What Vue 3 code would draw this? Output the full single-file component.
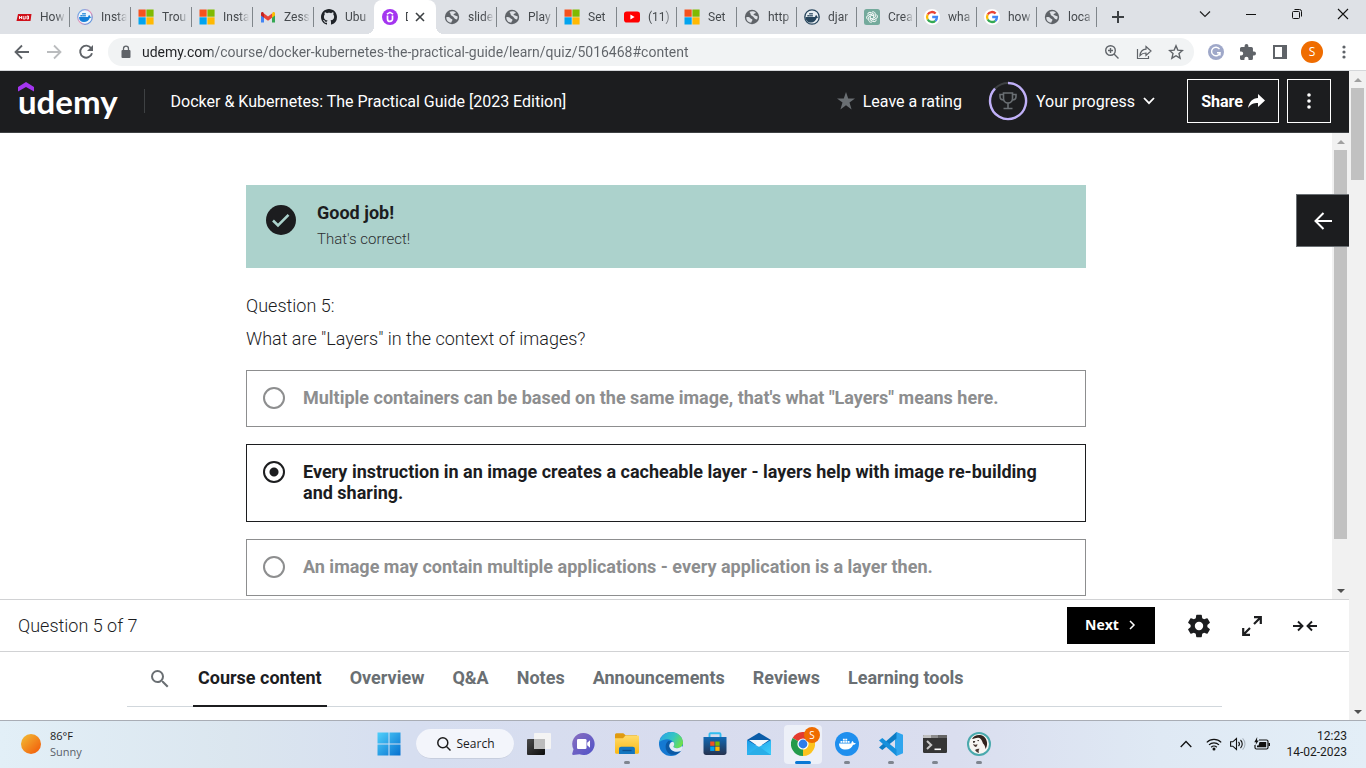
<script setup>
import { ref } from 'vue'

const leftTabs = [
  { icon: 'hud', title: 'How' },
  { icon: 'docker-ring', title: 'Insta' },
  { icon: 'ms', title: 'Trou' },
  { icon: 'ms', title: 'Insta' },
  { icon: 'gmail', title: 'Zess' },
  { icon: 'github', title: 'Ubu' }
]
const rightTabs = [
  { icon: 'globe', title: 'slide' },
  { icon: 'globe', title: 'Play' },
  { icon: 'ms', title: 'Set' },
  { icon: 'youtube', title: '(11)' },
  { icon: 'ms', title: 'Set' },
  { icon: 'globe', title: 'http' },
  { icon: 'docker-dark', title: 'djar' },
  { icon: 'gpt', title: 'Crea' },
  { icon: 'google', title: 'wha' },
  { icon: 'google', title: 'how' },
  { icon: 'globe', title: 'loca' }
]
const url = ref('udemy.com/course/docker-kubernetes-the-practical-guide/learn/quiz/5016468#content')

const picked = ref(1)
const answers = [
  'Multiple containers can be based on the same image, that\'s what "Layers" means here.',
  'Every instruction in an image creates a cacheable layer - layers help with image re-building and sharing.',
  'An image may contain multiple applications - every application is a layer then.'
]
const sections = ['Course content', 'Overview', 'Q&A', 'Notes', 'Announcements', 'Reviews', 'Learning tools']

const apps = [
  { icon: 'taskview', label: 'Task view' },
  { icon: 'chat', label: 'Chat' },
  { icon: 'explorer', label: 'File Explorer', open: true },
  { icon: 'edge', label: 'Edge' },
  { icon: 'store', label: 'Store' },
  { icon: 'mail', label: 'Mail' },
  { icon: 'chrome', label: 'Chrome', active: true },
  { icon: 'docker', label: 'Docker', open: true },
  { icon: 'vscode', label: 'Code', open: true },
  { icon: 'terminal', label: 'Terminal', open: true },
  { icon: 'beaver', label: 'DBeaver', open: true }
]
</script>

<template>
  <svg class="sprite" width="0" height="0" aria-hidden="true">
    <defs>
      <linearGradient id="g-win" x1="0" y1="0" x2="1" y2="1">
        <stop offset="0" stop-color="#4fd0fb" /><stop offset="1" stop-color="#0670cf" />
      </linearGradient>
      <linearGradient id="g-ring" x1="0" y1="0" x2="1" y2="1">
        <stop offset="0" stop-color="#3cb2ff" /><stop offset=".5" stop-color="#f48fb1" /><stop offset="1" stop-color="#2496ed" />
      </linearGradient>
      <linearGradient id="g-sun" x1="0" y1="0" x2="1" y2="1">
        <stop offset=".15" stop-color="#f2b030" /><stop offset=".8" stop-color="#f26a10" />
      </linearGradient>
      <linearGradient id="g-chat" x1="0" y1="0" x2="1" y2="1">
        <stop offset="0" stop-color="#8a6fc0" /><stop offset="1" stop-color="#4f52c8" />
      </linearGradient>
      <linearGradient id="g-folder" x1="0" y1="0" x2="0" y2="1">
        <stop offset="0" stop-color="#ffdc6b" /><stop offset="1" stop-color="#fbb813" />
      </linearGradient>
      <linearGradient id="g-edge" x1="0" y1=".2" x2="1" y2=".6">
        <stop offset="0" stop-color="#2aa5e8" /><stop offset=".55" stop-color="#35c6c2" /><stop offset="1" stop-color="#6ee04a" />
      </linearGradient>
      <linearGradient id="g-store" x1="0" y1="0" x2="0" y2="1">
        <stop offset="0" stop-color="#1169b4" /><stop offset="1" stop-color="#26324f" />
      </linearGradient>
      <linearGradient id="g-mail" x1="0" y1="0" x2="1" y2="1">
        <stop offset="0" stop-color="#1c9be8" /><stop offset="1" stop-color="#3fd0fb" />
      </linearGradient>
      <linearGradient id="g-dark" x1="0" y1="0" x2="1" y2="1">
        <stop offset="0" stop-color="#4a4a4a" /><stop offset="1" stop-color="#0c0c0c" />
      </linearGradient>
    </defs>

    <symbol id="i-hud" viewBox="0 0 16 16">
      <path d="M2 5h13.5l-1 7H.5z" fill="#d0101a" />
      <path d="M3.500 7v3M5.500 7v3M3.500 8.500h2M7.200 7v3h2v-3M11 7v3h1.500v-3z" stroke="#fff" stroke-width=".9" fill="none" />
    </symbol>
    <symbol id="i-docker-ring" viewBox="0 0 16 16">
      <circle cx="8" cy="8" r="7.300" fill="#eef6fd" stroke="url(#g-ring)" stroke-width="1.200" />
      <path d="M2 8h9c.2-1 .6-1.600 1.200-2 .6.500.9 1.100.9 1.700.6-.1 1.200 0 1.600.3-.5.700-1.200.9-2 .9C11.800 11.600 9.800 13 7 13c-3 0-5-1.600-5-5z" fill="#1580d8" />
      <path d="M3.400 5.900h1.500v1.500H3.400zM5.300 5.900h1.500v1.500H5.300zM7.200 5.900h1.500v1.500H7.200zM5.300 4.100h1.500v1.400H5.300zM7.200 4.100h1.500v1.400H7.200z" fill="#1580d8" />
    </symbol>
    <symbol id="i-docker-dark" viewBox="0 0 16 16">
      <circle cx="8" cy="8" r="7.200" fill="#e8eef2" stroke="#27455c" stroke-width="1.300" />
      <path d="M1.500 8H11c.2-1 .6-1.600 1.200-2 .6.500.9 1.100.9 1.700.6-.1 1.200 0 1.600.3-.5.700-1.200.9-2 .9C11.800 11.600 9.800 13.500 7 13.500c-3.300 0-5.500-2-5.500-5.500z" fill="#27455c" />
      <path d="M3.400 5.900h1.500v1.500H3.400zM5.300 5.900h1.500v1.500H5.300zM7.200 5.900h1.500v1.500H7.200zM5.300 4.100h1.500v1.400H5.300zM7.200 4.100h1.500v1.400H7.200z" fill="#27455c" />
    </symbol>
    <symbol id="i-ms" viewBox="0 0 16 16">
      <path d="M.5.500h7.200v7.200H.5z" fill="#f6511d" /><path d="M8.400.500h7.200v7.200H8.400z" fill="#80ba01" />
      <path d="M.5 8.300h7.200v7.200H.5z" fill="#02a4ef" /><path d="M8.400 8.300h7.200v7.200H8.400z" fill="#ffb902" />
    </symbol>
    <symbol id="i-gmail" viewBox="0 0 16 16">
      <path d="M1 4v9.500h3V7z" fill="#4285f4" /><path d="M15 4v9.500h-3V7z" fill="#34a853" />
      <path d="M4 4.500v4.200l4 3 4-3V4.500l-4 3z" fill="#ea4335" />
      <path d="M1 4.300V6.500l3 2.200V4.500L3.200 3.200C2.200 2.500 1 3.200 1 4.300z" fill="#c5221f" />
      <path d="M15 4.300V6.500l-3 2.200V4.500l.8-1.300c1-.7 2.200 0 2.200 1.100z" fill="#fbbc04" />
    </symbol>
    <symbol id="i-github" viewBox="0 0 16 16">
      <path fill="#1f2328" d="M8 0C3.580 0 0 3.580 0 8c0 3.540 2.290 6.530 5.470 7.590.4.070.55-.17.55-.38 0-.19-.01-.82-.01-1.490-2.010.37-2.530-.49-2.690-.94-.09-.23-.48-.94-.82-1.130-.28-.15-.68-.52-.01-.53.63-.01 1.080.58 1.230.82.72 1.210 1.870.87 2.330.66.07-.52.28-.87.51-1.070-1.780-.2-3.640-.89-3.640-3.950 0-.87.31-1.590.82-2.150-.08-.2-.36-1.020.08-2.120 0 0 .67-.21 2.200.82.64-.18 1.320-.27 2-.27s1.360.09 2 .27c1.530-1.040 2.200-.82 2.200-.82.44 1.100.16 1.920.08 2.120.51.56.82 1.270.82 2.150 0 3.070-1.870 3.750-3.650 3.950.29.25.54.73.54 1.480 0 1.070-.01 1.930-.01 2.200 0 .21.15.46.55.38A8.010 8.010 0 0 0 16 8c0-4.420-3.580-8-8-8z" />
    </symbol>
    <symbol id="i-udemy" viewBox="0 0 16 16">
      <circle cx="8" cy="8" r="8" fill="#a435f0" />
      <path d="M4.900 5.200 8 3.300l3.100 1.900" stroke="#fff" stroke-width="1.500" fill="none" />
      <path d="M5.500 6.600v3.300a2.500 2.500 0 0 0 5 0V6.600" stroke="#fff" stroke-width="1.700" fill="none" />
    </symbol>
    <symbol id="i-globe" viewBox="0 0 16 16">
      <circle cx="8" cy="8" r="7.200" fill="#5f6368" />
      <path d="M2.300 8.200c1.900-.4 3.500.2 4.100 1 .7.900 1.900.4 2 1.600.1 1.200-.8 1.400-1.200 2.900-2.500-.2-5-2.200-4.900-5.500zM5.400 3c2-1 4.800-.9 6.500.8-.4 1-1.800.4-2.300 1.400-.4.800.9 1 1.600 1.300 1 .4 1.700 1 2.400.8.200 1.100 0 2.100-.6 3.200-1.100-.3-2.400-.7-2.800-1.600-.4-1-1.900-1.500-2.900-2.300C6.200 5.700 7 4.200 5.400 3z" fill="#dee1e6" />
    </symbol>
    <symbol id="i-youtube" viewBox="0 0 16 16">
      <rect x="0" y="2.400" width="16" height="11.200" rx="2.800" fill="#f00" /><path d="M6.400 5.500v5L10.600 8z" fill="#fff" />
    </symbol>
    <symbol id="i-gpt" viewBox="0 0 16 16">
      <rect width="16" height="16" rx="2.500" fill="#74aa9c" />
      <g fill="none" stroke="#fff" stroke-width=".9">
        <path id="petal" d="M8 3.100c1.400-.9 3.400.1 3.300 2v3L8 10" />
        <use href="#petal" transform="rotate(60 8 8)" /><use href="#petal" transform="rotate(120 8 8)" />
        <use href="#petal" transform="rotate(180 8 8)" /><use href="#petal" transform="rotate(240 8 8)" />
        <use href="#petal" transform="rotate(300 8 8)" />
      </g>
    </symbol>
    <symbol id="i-google" viewBox="0 0 16 16">
      <circle cx="8" cy="8" r="8" fill="#fff" />
      <g fill="none" stroke-width="2.300">
        <path d="M11.600 4.500A5 5 0 0 0 3.700 5.500" stroke="#ea4335" /><path d="M3.700 5.500a5 5 0 0 0 0 5" stroke="#fbbc05" />
        <path d="M3.700 10.500a5 5 0 0 0 7.600 1.300" stroke="#34a853" /><path d="M11.300 11.800A5 5 0 0 0 13 8H8.200" stroke="#4285f4" />
      </g>
    </symbol>

    <symbol id="i-taskview" viewBox="0 0 24 24">
      <rect x="7" y="1" width="17" height="16" rx="1" fill="#f4f4f4" />
      <rect x="0" y="7" width="18" height="16" rx="1" fill="url(#g-dark)" /><path d="M7 7h11v10H7z" fill="#bcbcbc" />
    </symbol>
    <symbol id="i-chat" viewBox="0 0 24 24">
      <path d="M12.500 1a11 11 0 1 1-4 21.200L2.200 23c-.8 0-1.200-.6-1-1.200l1.300-4.600A11 11 0 0 1 12.500 1z" fill="url(#g-chat)" />
      <rect x="6" y="7" width="9.500" height="10" rx="1.300" fill="#fff" /><path d="m16.200 10.700 2.800-2.500v7.600l-2.800-2.500z" fill="#fff" />
    </symbol>
    <symbol id="i-explorer" viewBox="0 0 24 24">
      <path d="M0 3c0-1 .5-1.700 1.500-1.700h6.800l2.400 2H22v4H0z" fill="#e09a10" />
      <path d="M0 6.200h8l2.500-2.800H23c.6 0 1 .4 1 1V20c0 1-.5 1.800-1.500 1.800h-21C.5 21.800 0 21 0 20z" fill="url(#g-folder)" />
      <path d="M4 22v-5c0-1.300.8-2.200 2.200-2.200h11.500c1.400 0 2.200.9 2.200 2.200v5z" fill="#1375bf" /><path d="M7.500 18.500h9" stroke="#0b4f8d" stroke-width="1.300" />
    </symbol>
    <symbol id="i-edge" viewBox="0 0 24 24">
      <circle cx="12" cy="12" r="12" fill="#1579d2" />
      <path d="M.3 10C1.500 4 6.500 0 12 0c7 0 12 5 12 10.500 0 3.800-2.800 5.700-6 5.700-2.600 0-4-.9-3.500-1.900.8-1.200 1-2.500.3-3.800C12.800 6.800 6 5.500.3 10z" fill="url(#g-edge)" />
      <path d="M9.500 8.700c-3.500 2.500-4 8.300-.3 12.300 4 3.200 9.800 2 12.700-2-5 2-10.400-.2-11.500-4.300-.6-2.300.1-4.300 1.600-5.200z" fill="#0c59a4" />
      <path d="M14.800 10.500c.7 1.300.5 2.600-.3 3.800-.5 1 .9 1.900 3.500 1.900 2 0 3.800-.7 4.900-2.100L24 15c-.8 2.500-1.500 3.600-2.200 4.100-5 1.900-10.300-.3-11.400-4.400-.6-2.300 2.600-6.500 4.400-4.200z" fill="#e4ebf5" />
    </symbol>
    <symbol id="i-store" viewBox="0 0 24 24">
      <path d="M6.500 6V2.300c0-.7.400-1 1-1h9c.6 0 1 .3 1 1V6" fill="none" stroke="#32bdf0" stroke-width="1.900" />
      <path d="M.5 5h23v15.500c0 1.500-1 2.500-2.500 2.500H3c-1.500 0-2.500-1-2.500-2.500z" fill="url(#g-store)" />
      <path d="M7.200 9.500h4.300v4.300H7.200z" fill="#f25022" /><path d="M12.300 9.500h4.300v4.300h-4.300z" fill="#7fba00" />
      <path d="M7.200 14.600h4.300v4.300H7.200z" fill="#00a4ef" /><path d="M12.300 14.600h4.300v4.300h-4.300z" fill="#ffb900" />
    </symbol>
    <symbol id="i-mail" viewBox="0 0 24 24">
      <path d="M0 8 12 .8 24 8l-4 5H4z" fill="#0b5ca8" /><path d="M2 8h20l-10 7z" fill="#f4f8fc" />
      <path d="M0 8v15h24V8L12 15z" fill="url(#g-mail)" /><path d="m0 23 12-8.500L24 23z" fill="#29aee8" />
    </symbol>
    <symbol id="i-chrome" viewBox="0 0 24 24">
      <path d="M12 12 1.600 6A12 12 0 0 1 22.400 6z" fill="#e33b2e" /><path d="M12 12 22.400 6A12 12 0 0 1 12 24z" fill="#fcc31e" />
      <path d="M12 12v12A12 12 0 0 1 1.600 6z" fill="#249b4b" />
      <path d="m7.200 14.600 4.800 2.700L12 24" fill="#249b4b" /><path d="M12 17.500h4.700L12 24z" fill="#fcc31e" />
      <circle cx="12" cy="12" r="5.600" fill="#fff" /><circle cx="12" cy="12" r="4.400" fill="#2e7de9" />
    </symbol>
    <symbol id="i-docker" viewBox="0 0 24 24">
      <circle cx="12" cy="12" r="12" fill="#1f8fee" />
      <path d="M4 11.500h12.300c.1-1.200.4-2 1.100-2.600.9.600 1.300 1.400 1.300 2.200.8-.1 1.500 0 2.100.4-.6 1-1.600 1.300-2.700 1.300-1.300 2.900-3.500 4.700-7.400 4.700-4.200 0-6.700-1.700-6.700-6z" fill="#fff" />
      <path d="M5.500 9h1.900v1.800H5.500zM7.900 9h1.900v1.800H7.900zM10.300 9h1.900v1.800h-1.900zM12.700 9h1.900v1.800h-1.900zM7.900 6.800h1.900v1.700H7.900zM10.300 6.800h1.900v1.700h-1.900z" fill="#fff" />
    </symbol>
    <symbol id="i-vscode" viewBox="0 0 24 24">
      <path d="M17.500 0 24 2.800v18.400L17.500 24 16 22V2z" fill="#2fa5ee" />
      <path d="M17.500 0v6.500L3.300 18 0 15.500z" fill="#0c7cc4" /><path d="M17.500 24v-6.500L3.300 6 0 8.500z" fill="#1590dc" />
    </symbol>
    <symbol id="i-terminal" viewBox="0 0 24 24">
      <rect x="0" y="3" width="24" height="18" rx="1.300" fill="#353535" />
      <path d="M1.300 3H8v3H0V4.300C0 3.500.5 3 1.300 3z" fill="#c0c0c0" /><path d="M8 3h7.500v3H8z" fill="#8d8d8d" /><path d="M15.500 3h7c.9 0 1.500.5 1.500 1.300V6h-8.500z" fill="#666" />
      <path d="m4 9 4.200 4L4 17" stroke="#c8c8c8" stroke-width="2" fill="none" /><path d="M11.500 17.300h6.500" stroke="#fff" stroke-width="1.600" />
    </symbol>
    <symbol id="i-beaver" viewBox="0 0 24 24">
      <circle cx="12" cy="12" r="11" fill="#f7f5f2" stroke="#4aa9ad" stroke-width="2" />
      <path d="M5 7C6.500 4 10 2.500 13 3c4 .5 6.500 3.500 7 7.500.3 2.500-.3 4.800-1.500 6.500-.3-2.500-1-4.500-2.500-5.500-1-2.500-1.500-4.500-3.500-5.500C10 5 8 6.500 5 7z" fill="#33231e" />
      <path d="M6 9.500c.8-.6 2-.5 2.300.3-.4.900-1.500 1.200-2.300.8zM10.500 8.300c.6-.4 1.200-.3 1.500.2-.3.600-1 .8-1.500.5z" fill="#1d1512" />
      <path d="M6 12c1.500.8 3 .8 4.500.2-.2 1.500-.8 2.500-1.800 2.800C7.500 14.500 6.500 13.500 6 12zM8 18c1.500-1 3-1.500 4.500-1.200-1 1.400-1 2.700-.5 4.200-1.800-.5-3-1.500-4-3z" fill="#4a3a34" />
    </symbol>
    <symbol id="i-search" viewBox="0 0 24 24">
      <path fill="currentColor" d="M15.500 14h-.79l-.28-.27A6.470 6.470 0 0 0 16 9.500 6.500 6.500 0 1 0 9.500 16c1.610 0 3.090-.59 4.230-1.570l.27.280v.79l5 4.990L20.490 19zm-6 0C7.010 14 5 11.990 5 9.500S7.010 5 9.500 5 14 7.010 14 9.500 11.990 14 9.500 14z" />
    </symbol>
  </svg>

  <div class="screen">
    <div class="tabstrip">
      <div v-for="(t, i) in leftTabs" :key="'l' + i" class="tab" :class="{ last: i === 5 }">
        <svg class="fav"><use :href="'#i-' + t.icon" /></svg><span class="tab-title">{{ t.title }}</span>
      </div>
      <div class="tab current">
        <svg class="fav"><use href="#i-udemy" /></svg><span class="tab-title">D</span>
        <button class="tab-close" aria-label="Close tab">
          <svg width="10" height="10" viewBox="0 0 10 10"><path d="m1 1 8 8M9 1 1 9" stroke="#3c4043" stroke-width="1.600" /></svg>
        </button>
      </div>
      <div v-for="(t, i) in rightTabs" :key="'r' + i" class="tab narrow">
        <svg class="fav"><use :href="'#i-' + t.icon" /></svg><span class="tab-title">{{ t.title }}</span>
      </div>
      <button class="new-tab" aria-label="New tab">
        <svg width="12" height="12" viewBox="0 0 12 12"><path d="M6 0v12M0 6h12" stroke="#3c4043" stroke-width="2" /></svg>
      </button>
      <div class="window-buttons">
        <button aria-label="Search tabs"><svg width="12" height="12" viewBox="0 0 12 12"><path d="m1 3.500 5 5 5-5" fill="none" stroke="#222" stroke-width="1.200" /></svg></button>
        <button aria-label="Minimize"><svg width="12" height="12" viewBox="0 0 12 12"><path d="M1 6.500h10" stroke="#111" /></svg></button>
        <button aria-label="Restore"><svg width="12" height="12" viewBox="0 0 12 12"><g fill="none" stroke="#111"><rect x="1.500" y="3.500" width="7" height="7" rx="1" /><path d="M3.500 1.500h5a2 2 0 0 1 2 2v5" /></g></svg></button>
        <button aria-label="Close"><svg width="12" height="12" viewBox="0 0 12 12"><path d="m1 1 10 10M11 1 1 11" stroke="#111" stroke-width="1.100" /></svg></button>
      </div>
    </div>

    <div class="toolbar">
      <button class="nav" aria-label="Back"><svg width="16" height="16" viewBox="0 0 16 16"><path d="M15 8H2M8 1.500 1.500 8 8 14.500" fill="none" stroke="#5f6368" stroke-width="1.800" /></svg></button>
      <button class="nav" aria-label="Forward"><svg width="16" height="16" viewBox="0 0 16 16"><path d="M1 8h13M8 1.500 14.500 8 8 14.500" fill="none" stroke="#babcbe" stroke-width="1.800" /></svg></button>
      <button class="nav" aria-label="Reload"><svg width="16" height="16" viewBox="0 0 16 16"><path d="M13.200 4.300A6 6 0 1 0 14 9.300" fill="none" stroke="#5f6368" stroke-width="1.900" /><path d="M15 1v6H9z" fill="#5f6368" /></svg></button>
      <div class="omnibox">
        <svg width="12" height="14" viewBox="0 0 12 14"><rect x="1.500" y="5" width="9" height="8" rx="1" fill="#5f6368" /><path d="M3.500 5.500V3.700a2.500 2.500 0 0 1 5 0v1.800" fill="none" stroke="#5f6368" stroke-width="1.300" /></svg>
        <input v-model="url" class="url" aria-label="Address" />
        <button aria-label="Zoom"><svg width="16" height="16" viewBox="0 0 16 16"><g fill="none" stroke="#5f6368" stroke-width="1.400"><circle cx="6.500" cy="6.500" r="4.800" /><path d="m10 10 4.500 4.500M6.500 4v5M4 6.500h5" /></g></svg></button>
        <button aria-label="Share page"><svg width="16" height="16" viewBox="0 0 16 16"><g fill="none" stroke="#5f6368" stroke-width="1.200"><path d="M1.500 5v9.500h11V12" /><path d="M10 2.500 15 7l-5 4.500V9c-2.800 0-4.500.8-6 2.500.3-3.500 2.500-6 6-6.300z" /></g></svg></button>
        <button aria-label="Bookmark"><svg width="16" height="16" viewBox="0 0 16 16"><path d="m8 1.800 1.800 4.300 4.700.4L11 9.600l1.100 4.600L8 11.700l-4.100 2.500L5 9.600 1.500 6.500l4.700-.4z" fill="none" stroke="#5f6368" stroke-width="1.400" /></svg></button>
      </div>
      <button class="ext" aria-label="Grammar"><svg width="16" height="16" viewBox="0 0 16 16"><circle cx="8" cy="8" r="8" fill="#9fa8c9" /><path d="M11.500 5.200A4.300 4.300 0 1 0 12 8.700H9M12 8.700v2.800" fill="none" stroke="#fff" stroke-width="1.400" /></svg></button>
      <button class="ext" aria-label="Extensions"><svg width="16" height="16" viewBox="2 1 21 21"><path fill="#5f6368" d="M20.500 11H19V7a2 2 0 0 0-2-2h-4V3.500a2.500 2.500 0 0 0-5 0V5H4a2 2 0 0 0-2 2v3.800h1.500a2.700 2.700 0 0 1 0 5.400H2V20c0 1.100.9 2 2 2h3.800v-1.500a2.700 2.700 0 0 1 5.400 0V22H17a2 2 0 0 0 2-2v-4h1.500a2.500 2.500 0 0 0 0-5z" /></svg></button>
      <button class="ext" aria-label="Side panel"><svg width="14" height="14" viewBox="0 0 14 14"><path fill="#5f6368" fill-rule="evenodd" d="M0 0h14v14H0zM2 2v10h7V2z" /></svg></button>
      <button class="profile" aria-label="Profile">S</button>
      <button class="ext menu" aria-label="Menu"><svg width="4" height="14" viewBox="0 0 4 14"><g fill="#5f6368"><circle cx="2" cy="2" r="1.600" /><circle cx="2" cy="7" r="1.600" /><circle cx="2" cy="12" r="1.600" /></g></svg></button>
    </div>

    <div class="page">
      <div class="page-body">
        <header class="course-bar">
          <a class="logo" href="#"><svg width="16" height="10" viewBox="0 0 16 10"><path d="M0 9.500V5l8-5 8 5v4.500L8 5z" fill="#a435f0" /></svg><span>udemy</span></a>
          <span class="rule"></span>
          <a class="course-title" href="#">Docker &amp; Kubernetes: The Practical Guide [2023 Edition]</a>
          <button class="bar-link rating"><svg width="18" height="18" viewBox="0 0 18 18"><path d="m9 0 2.200 6.600H18l-5.500 4 2.100 6.900L9 13.300l-5.600 4.200 2.100-6.900-5.500-4h6.800z" fill="#6a6f73" /></svg>Leave a rating</button>
          <button class="bar-link progress">
            <svg width="40" height="40" viewBox="0 0 40 40">
              <circle cx="20" cy="20" r="18" fill="none" stroke="#3e4143" stroke-width="2" />
              <path d="M20 2A18 18 0 1 1 7 7.600" fill="none" stroke="#c0b0f8" stroke-width="2.400" />
              <g fill="none" stroke="#6a6f73" stroke-width="1.600"><path d="M15.500 12h9v5.500a4.500 4.500 0 0 1-9 0zM15.500 13.500H12v2c0 2 1.500 3.500 3.800 3.500M24.500 13.500H28v2c0 2-1.500 3.500-3.800 3.500M20 22v5M15.500 27.500h9" /></g>
            </svg>
            Your progress
            <svg width="12" height="12" viewBox="0 0 12 12"><path d="m1 3 5 5.200L11 3" fill="none" stroke="#fff" stroke-width="1.800" /></svg>
          </button>
          <button class="outlined share">Share <svg width="17" height="14" viewBox="0 0 17 14"><path d="M10 0v4C4.500 4.300 1 8 0 14c2.500-3.700 5.500-5 10-5v4l7-6.500z" fill="#fff" /></svg></button>
          <button class="outlined more" aria-label="More"><svg width="4" height="16" viewBox="0 0 4 16"><g fill="#fff"><circle cx="2" cy="2" r="1.800" /><circle cx="2" cy="8" r="1.800" /><circle cx="2" cy="14" r="1.800" /></g></svg></button>
        </header>

        <div class="viewer">
          <main class="quiz-area">
            <section class="quiz">
              <div class="alert">
                <svg width="30" height="30" viewBox="0 0 30 30"><circle cx="15" cy="15" r="15" fill="#1c1d1f" /><path d="m7 15.500 5 5L22.500 9.800" fill="none" stroke="#acd2cc" stroke-width="2.600" /></svg>
                <div><h2>Good job!</h2><p>That's correct!</p></div>
              </div>
              <p class="q-number">Question 5:</p>
              <p class="q-text">What are "Layers" in the context of images?</p>
              <label v-for="(a, i) in answers" :key="i" class="answer" :class="{ chosen: picked === i }">
                <input v-model="picked" type="radio" name="answer" :value="i" /><span>{{ a }}</span>
              </label>
            </section>
          </main>
          <div class="scrollbar inner"><i class="up"></i><div class="track"><div class="thumb"></div></div><i class="down"></i></div>
          <button class="open-side" aria-label="Open course content"><svg width="18" height="18" viewBox="0 0 18 18"><path d="M18 9H2M9.500 1 1.500 9l8 8" fill="none" stroke="#fff" stroke-width="2" /></svg></button>
        </div>

        <div class="quiz-footer">
          <span class="count">Question 5 of 7</span>
          <button class="next">Next <svg width="10" height="10" viewBox="0 0 10 10"><path d="m3 1 4 4-4 4" fill="none" stroke="#fff" stroke-width="1.500" /></svg></button>
          <button class="tool" aria-label="Settings"><svg width="28" height="28" viewBox="0 0 24 24"><path fill="#1c1d1f" d="M19.140 12.940c.04-.3.060-.61.060-.94 0-.32-.02-.64-.07-.94l2.030-1.580a.49.49 0 0 0 .12-.61l-1.920-3.320a.488.488 0 0 0-.59-.22l-2.390.96c-.5-.38-1.030-.7-1.620-.94l-.36-2.540a.484.484 0 0 0-.48-.41h-3.840c-.24 0-.43.17-.47.41l-.36 2.540c-.59.24-1.130.57-1.620.94l-2.390-.96c-.22-.08-.47 0-.59.22L2.740 8.870c-.12.21-.08.47.12.61l2.030 1.580c-.05.3-.09.63-.09.94s.02.64.07.94l-2.030 1.580a.49.49 0 0 0-.12.61l1.920 3.320c.12.22.37.29.59.22l2.390-.96c.5.38 1.030.7 1.620.94l.36 2.540c.05.24.24.41.48.41h3.840c.24 0 .44-.17.47-.41l.36-2.540c.59-.24 1.130-.56 1.620-.94l2.390.96c.22.080.47 0 .59-.22l1.920-3.320c.12-.22.070-.47-.12-.61zM12 15.600A3.600 3.600 0 1 1 12 8.400a3.600 3.600 0 0 1 0 7.200z" /></svg></button>
          <button class="tool" aria-label="Full screen"><svg width="20" height="20" viewBox="0 0 20 20"><path d="M12 1.200h6.800V8M18.500 1.500 12 8M8 18.800H1.200V12M1.500 18.500 8 12" fill="none" stroke="#1c1d1f" stroke-width="2.200" /></svg></button>
          <button class="tool" aria-label="Shrink"><svg width="24" height="12" viewBox="0 0 24 12"><path d="M0 6h9M5 1.500 9.500 6 5 10.500M24 6h-9M19 1.500 14.500 6l4.500 4.500" fill="none" stroke="#1c1d1f" stroke-width="1.900" /></svg></button>
        </div>

        <nav class="sections">
          <button class="find" aria-label="Search course"><svg width="24" height="24"><use href="#i-search" /></svg></button>
          <a v-for="(s, i) in sections" :key="s" href="#" :class="{ here: i === 0 }">{{ s }}</a>
        </nav>
      </div>
      <div class="scrollbar outer"><i class="up"></i><div class="track"><div class="thumb"></div></div><i class="down"></i></div>
    </div>

    <footer class="taskbar">
      <div class="weather">
        <svg width="20" height="20" viewBox="0 0 20 20"><circle cx="10" cy="10" r="10" fill="url(#g-sun)" /></svg>
        <div><b>86°F</b><span>Sunny</span></div>
      </div>
      <div class="dock">
        <button class="app" aria-label="Start"><svg width="24" height="24" viewBox="0 0 24 24"><path d="M.5.500h11v11H.5zM12.500.500h11v11h-11zM.5 12.500h11v11H.5zM12.500 12.500h11v11h-11z" fill="url(#g-win)" /></svg></button>
        <button class="search"><svg width="16" height="16" viewBox="0 0 16 16"><g fill="none" stroke="#1b1b1b" stroke-width="1.500"><circle cx="6.800" cy="6.800" r="5" /><path d="m10.500 10.500 4 4" /></g></svg>Search</button>
        <button v-for="a in apps" :key="a.icon" class="app" :class="{ open: a.open, active: a.active }" :aria-label="a.label">
          <svg width="24" height="24"><use :href="'#i-' + a.icon" /></svg>
          <span v-if="a.active" class="badge">S</span>
        </button>
      </div>
      <div class="tray">
        <svg width="12" height="8" viewBox="0 0 12 8"><path d="m.7 7 5.300-5.500L11.300 7" fill="none" stroke="#111" stroke-width="1.300" /></svg>
        <div class="status">
          <svg width="16" height="14" viewBox="0 0 16 14"><g fill="none" stroke="#111" stroke-width="1.200"><path d="M.8 5.400a10.200 10.200 0 0 1 14.400 0M3 7.900a7.100 7.100 0 0 1 10 0M5.200 10.300a4 4 0 0 1 5.600 0" /></g><circle cx="8" cy="12" r="1.500" fill="#111" /></svg>
          <svg width="16" height="14" viewBox="0 0 16 14"><g fill="none" stroke="#111" stroke-width="1.100"><path d="M.6 4.800h2.200L6.500 1.500v11L2.800 9.200H.6zM8.500 4.800a3.300 3.300 0 0 1 0 4.400M10.500 3a5.500 5.500 0 0 1 0 8" /><path d="M12.600 1.300a8 8 0 0 1 0 11.400" stroke="#aab4be" /></g></svg>
          <svg width="16" height="14" viewBox="0 0 16 14"><path d="M5 3h7.500c1 0 1.500.6 1.500 1.500v6c0 1-.5 1.500-1.500 1.500h-10C1.500 12 1 11.500 1 10.500V8" fill="none" stroke="#111" stroke-width="1.200" /><path d="M5.500 5h6.700v5.200H3V8.500h1.500zM14.500 6H16v3h-1.500zM3.200 0 .3 5.200h1.900L1.500 8 4.800 3.500H3z" fill="#111" /></svg>
        </div>
        <div class="clock"><span>12:23</span><span>14-02-2023</span></div>
      </div>
    </footer>
  </div>
</template>

<style>
body { margin: 0; overflow: hidden; }
</style>

<style scoped>
* { box-sizing: border-box; }
button { border: 0; background: none; padding: 0; margin: 0; font: inherit; color: inherit; display: flex; align-items: center; justify-content: center; cursor: pointer; }
a { color: inherit; text-decoration: none; }
p, h2 { margin: 0; }
svg { flex: none; display: block; }
.sprite { position: absolute; }

.screen { display: flex; flex-direction: column; height: 100vh; background: #fff; font-family: "Open Sans", "Noto Sans", sans-serif; }

.tabstrip { display: flex; height: 34px; padding-left: 8px; background: #dee1e6; font: 12px Roboto, "Open Sans", sans-serif; color: #45494d; }
.tab { position: relative; display: flex; align-items: center; gap: 8px; width: 61px; padding-left: 8px; }
.tab.narrow { width: 60px; }
.tab::after { content: ""; position: absolute; right: -1px; top: 7px; height: 20px; width: 1px; background: #80868b; }
.tab.last::after, .tab.current::after { display: none; }
.fav { width: 16px; height: 16px; }
.tab-title { max-width: 26px; overflow: hidden; white-space: nowrap; -webkit-mask-image: linear-gradient(to right, #000 16px, transparent 26px); mask-image: linear-gradient(to right, #000 16px, transparent 26px); }
.tab.current { gap: 7px; width: 62px; background: #fff; border-radius: 8px 8px 0 0; }
.tab.current::before { content: ""; position: absolute; left: -8px; right: -8px; bottom: 0; height: 8px; background: radial-gradient(circle at 0 0, transparent 8px, #fff 8px) left / 8px 8px no-repeat, radial-gradient(circle at 100% 0, transparent 8px, #fff 8px) right / 8px 8px no-repeat; }
.tab.current .tab-title { width: 3px; }
.tab-close { width: 10px; height: 10px; }
.new-tab { width: 44px; }
.window-buttons { display: flex; margin-left: auto; height: 28px; }
.window-buttons button { width: 46px; }

.toolbar { display: flex; align-items: center; height: 37px; padding: 0 14px 1px 6px; border-bottom: 1px solid #d5d7da; background: #fff; }
.nav { width: 32px; height: 28px; }
.omnibox { flex: 1; display: flex; align-items: center; height: 28px; margin: 0 6px; padding: 0 2px 0 12px; border-radius: 14px; background: #f1f3f4; }
.omnibox button { width: 32px; height: 28px; }
.url { flex: 1; min-width: 0; margin-left: 10px; padding: 0; border: 0; outline: 0; font: 14px Roboto, "Open Sans", sans-serif; color: transparent; background: linear-gradient(to right, #202124 70px, #5f6368 70px); -webkit-background-clip: text; background-clip: text; }
.ext { width: 32px; height: 28px; }
.profile { width: 22px; height: 22px; margin: 0 5px; border-radius: 50%; background: #ef6c00; color: #fff; font-size: 12px; }
.ext.menu { width: 32px; margin-right: -8px; }

.page { flex: 1; min-height: 0; display: flex; font-family: Roboto, "Open Sans", sans-serif; color: #1c1d1f; }
.page-body { flex: 1; min-width: 0; display: flex; flex-direction: column; overflow: hidden; }
.course-bar { display: flex; align-items: center; height: 62px; padding: 0 18px 1px; background: #1c1d1f; border-bottom: 1px solid #3e4143; color: #fff; font-size: 16px; font-weight: 400; }
.logo { position: relative; font: 700 33px/40px Lato, sans-serif; }
.logo svg { position: absolute; left: 0; top: 1px; }
.rule { width: 1px; height: 24px; margin: 0 26px; background: #3e4143; }
.course-title { margin-right: auto; }
.bar-link { gap: 8px; margin-right: 26px; }
.progress { margin-right: 32px; }
.outlined { height: 44px; border: 1px solid #fff; font-weight: 700; }
.share { width: 92px; gap: 5px; margin-right: 8px; }
.more { width: 44px; }

.viewer { position: relative; flex: 1; min-height: 0; display: flex; }
.quiz-area { flex: 1; overflow: hidden; }
.quiz { max-width: 840px; margin: 0 auto; padding-top: 52px; }
.alert { display: flex; gap: 21px; padding: 20px 20px 18px; background: #acd2cc; min-height: 83px; }
.alert h2 { font-size: 18px; line-height: 20px; margin-top: -2px; }
.alert p { font-size: 15px; line-height: 20px; margin-top: 6px; color: #2d2f31; font-weight: 300; }
.q-number, .q-text { font-size: 18px; line-height: 25px; color: #1c1d1f; font-weight: 300; }
.q-number { margin: 25px 0 8px; }
.q-text { margin-bottom: 19px; }
.answer { display: flex; gap: 18px; margin-bottom: 17px; padding: 16px 32px 18px 16px; border: 1px solid #8d8e8f; color: #8d8e8f; font-size: 18px; line-height: 21px; font-weight: 700; }
.answer input { appearance: none; flex: none; width: 22px; height: 22px; margin: 0 0 -1px; border: 2px solid #8d8e8f; border-radius: 50%; }
.answer.chosen { border-color: #1c1d1f; color: #1c1d1f; }
.answer.chosen input { border-color: #1c1d1f; background: radial-gradient(circle, #1c1d1f 4px, transparent 5px); }
.open-side { position: absolute; right: 0; top: 61px; width: 53px; height: 53px; background: #1c1d1f; border: 1px solid #6a6f73; border-right: 0; }

.scrollbar { width: 17px; display: flex; flex-direction: column; align-items: center; background: #f1f1f1; }
.scrollbar i { height: 17px; display: flex; align-items: center; }
.scrollbar i::before { content: ""; border: 4px solid transparent; }
.scrollbar .up::before { border-top: 0; border-bottom-color: #a0a0a0; }
.scrollbar .down::before { border-bottom: 0; border-top-color: #505050; }
.track { flex: 1; width: 13px; }
.thumb { background: #c1c1c1; }
.inner .thumb { height: 90%; }
.outer .thumb { height: 15%; }

.quiz-footer { display: flex; align-items: center; height: 53px; padding: 0 18px; border-top: 1px solid #d1d2d4; border-bottom: 1px solid #d1d2d4; }
.count { font-size: 18px; margin-right: auto; font-weight: 300; }
.next { width: 88px; height: 37px; gap: 8px; margin-right: 17px; padding-bottom: 2px; background: #000; color: #fff; font: 700 14px "Open Sans", sans-serif; }
.tool { width: 53px; height: 37px; }
.sections { display: flex; width: 1095px; max-width: 100%; height: 55px; margin: 0 auto 13px; border-bottom: 1px solid #d1d7dc; font-size: 18px; font-weight: 700; color: #6a6f73; }
.find { width: 66px; color: #6a6f73; }
.sections a { height: 55px; padding: 0 5px; margin-right: 18px; line-height: 52px; border-bottom: 2px solid transparent; }
.sections .here { color: #1c1d1f; border-color: #1c1d1f; }

.taskbar { display: flex; align-items: center; height: 48px; padding-bottom: 1px; border-top: 1px solid #a9adb5; background: linear-gradient(to right, #e2eff7, #dbe6ef 17%, #d6def0 30%, #d8dcee 50%, #dadeef 70%, #dfe9f4 85%, #e3eef7); color: #1b1b1b; font-size: 12px; }
.weather, .tray { flex: 1; display: flex; align-items: center; }
.weather { gap: 9px; padding-left: 21px; line-height: 16px; font-size: 11px; }
.weather b, .weather span, .clock span { display: block; font-weight: 400; }
.weather span { color: #5a6068; }
.dock { display: flex; align-items: center; }
.app { position: relative; width: 44px; height: 46px; }
.search { width: 98px; height: 30px; margin: 0 3px 0 5px; gap: 5px; border-radius: 15px; background: #f3f5fb; border-bottom: 1px solid #c7cede; }
.app.open::after, .app.active::after { content: ""; position: absolute; bottom: 3px; width: 6px; height: 3px; border-radius: 2px; background: #7f858f; }
.app.active::before { content: ""; position: absolute; inset: 4px 3px 3px; border-radius: 4px; background: #edf0f8; }
.app.active::after { width: 16px; background: #0a78d4; }
.app.active svg { position: relative; }
.badge { position: absolute; right: 5px; top: 6px; width: 16px; height: 16px; border-radius: 50%; background: #ef6c00; color: #fff; font-size: 10px; line-height: 16px; text-align: center; }
.tray { justify-content: flex-end; gap: 14px; padding-right: 19px; }
.status { display: flex; gap: 8px; }
.clock { margin-left: 2px; text-align: right; font: 12px/16px Roboto, sans-serif; }
</style>
